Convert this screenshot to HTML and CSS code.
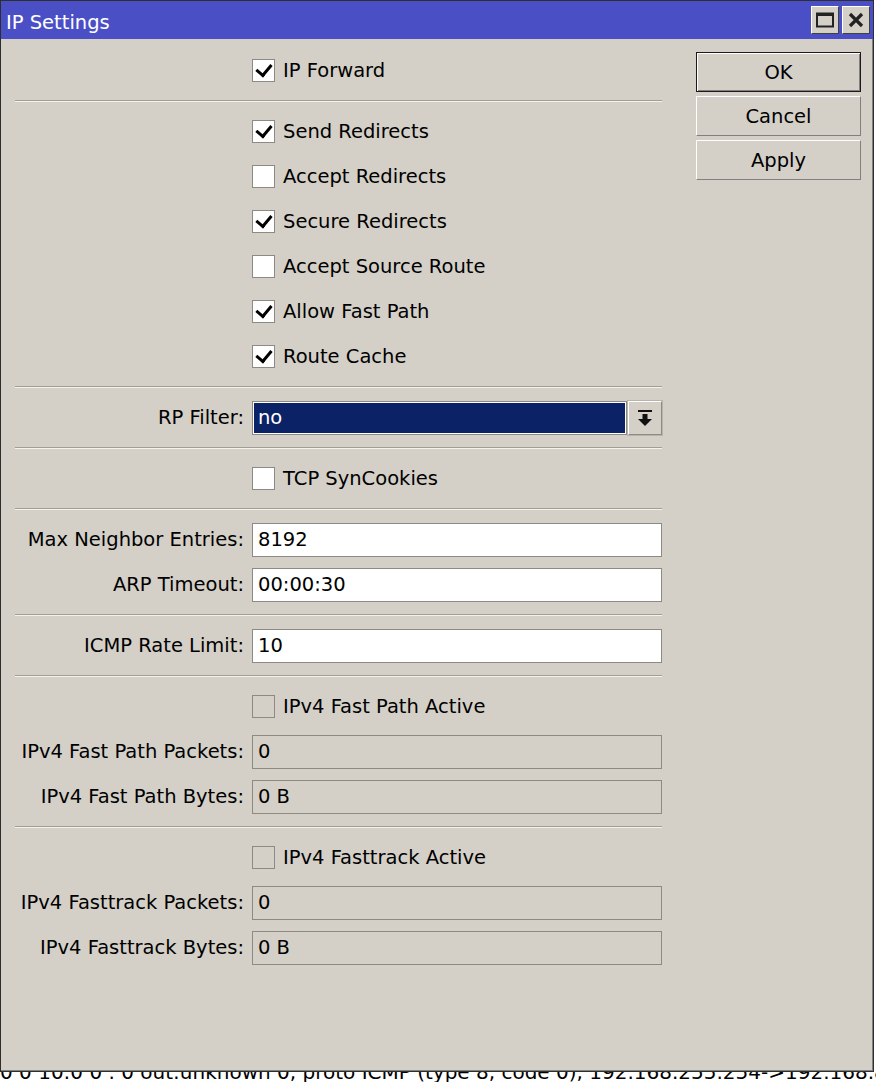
FILE: index.html
```html
<!DOCTYPE html>
<html>
    <head>
        <title>IP Settings</title>
        <link rel="stylesheet" href="styles.css">
    </head>
    <body>
        <!-- dialog window -->
        <div class="window">
            <div class="titlebar">
                <span class="title">IP Settings</span>
                <div class="tb-buttons">
                    <div class="tb-btn">
                        <svg width="18" height="16" viewBox="0 0 18 16"><rect x="1" y="1.5" width="16" height="13" fill="none" stroke="#222" stroke-width="2"/><rect x="1" y="1" width="16" height="3" fill="#222"/></svg>
                    </div>
                    <div class="tb-btn">
                        <svg width="16" height="16" viewBox="0 0 16 16"><path d="M2 2 L14 14 M14 2 L2 14" stroke="#222" stroke-width="3.2"/></svg>
                    </div>
                </div>
            </div>

            <div class="client">
                <div class="form">
                    <div class="row"><span></span><div class="check"><span class="box on"></span>IP Forward</div></div>
                    <div class="sep"></div>
                    <div class="row"><span></span><div class="check"><span class="box on"></span>Send Redirects</div></div>
                    <div class="row"><span></span><div class="check"><span class="box"></span>Accept Redirects</div></div>
                    <div class="row"><span></span><div class="check"><span class="box on"></span>Secure Redirects</div></div>
                    <div class="row"><span></span><div class="check"><span class="box"></span>Accept Source Route</div></div>
                    <div class="row"><span></span><div class="check"><span class="box on"></span>Allow Fast Path</div></div>
                    <div class="row"><span></span><div class="check"><span class="box on"></span>Route Cache</div></div>
                    <div class="sep"></div>
                    <div class="row">
                        <span class="label">RP Filter:</span>
                        <div class="combo">
                            <div class="combo-value">no</div>
                            <div class="combo-btn">
                                <svg width="16" height="18" viewBox="0 0 16 18"><rect x="1" y="1" width="14" height="2" fill="#111"/><rect x="5.5" y="5" width="5" height="5" fill="#111"/><path d="M1 10 L15 10 L8 17 Z" fill="#111"/></svg>
                            </div>
                        </div>
                    </div>
                    <div class="sep"></div>
                    <div class="row"><span></span><div class="check"><span class="box"></span>TCP SynCookies</div></div>
                    <div class="sep"></div>
                    <div class="row"><span class="label">Max Neighbor Entries:</span><div class="field">8192</div></div>
                    <div class="row"><span class="label">ARP Timeout:</span><div class="field">00:00:30</div></div>
                    <div class="sep"></div>
                    <div class="row"><span class="label">ICMP Rate Limit:</span><div class="field">10</div></div>
                    <div class="sep"></div>
                    <div class="row"><span></span><div class="check"><span class="box off"></span>IPv4 Fast Path Active</div></div>
                    <div class="row"><span class="label">IPv4 Fast Path Packets:</span><div class="field ro">0</div></div>
                    <div class="row"><span class="label">IPv4 Fast Path Bytes:</span><div class="field ro">0 B</div></div>
                    <div class="sep"></div>
                    <div class="row"><span></span><div class="check"><span class="box off"></span>IPv4 Fasttrack Active</div></div>
                    <div class="row"><span class="label">IPv4 Fasttrack Packets:</span><div class="field ro">0</div></div>
                    <div class="row"><span class="label">IPv4 Fasttrack Bytes:</span><div class="field ro">0 B</div></div>
                </div>

                <div class="actions">
                    <div class="btn default">OK</div>
                    <div class="btn">Cancel</div>
                    <div class="btn">Apply</div>
                </div>
            </div>
        </div>

        <!-- log window peeking out underneath -->
        <div class="log">
            <div class="log-line">0 0 10:0 0 . 0 out:unknown 0, proto ICMP (type 8, code 0), 192.168.255.254-&gt;192.168.88.1</div>
        </div>
    </body>
</html>
```

FILE: styles.css
```css
body {
    margin: 0px;
    background-color: #ffffff;
    font-family: "DejaVu Sans", sans-serif;
    font-size: 19.5px;
    color: #000000;
    overflow: hidden;
}
.window {
    width: 872px;
    height: 1070px;
    background-color: #d4d0c8;
    border: 1px solid #2e2e2e;
    box-shadow: inset -1px -1px 0px #808080;
}
.titlebar {
    height: 38px;
    background-color: #4b4fc6;
    display: flex;
    align-items: center;
    justify-content: space-between;
    padding-left: 5px;
    padding-right: 3px;
}
.title {
    color: white;
    font-size: 19.5px;
    padding-top: 4px;
}
.tb-buttons {
    display: flex;
    gap: 3px;
}
.tb-btn {
    width: 26px;
    height: 26px;
    background-color: #d4d0c8;
    border: 1px solid;
    border-color: #ffffff #404040 #404040 #ffffff;
    display: flex;
    align-items: center;
    justify-content: center;
}
.client {
    display: flex;
    align-items: flex-start;
}
.form {
    padding-top: 9px;
    padding-left: 14px;
    width: 647px;
}
.row {
    display: grid;
    grid-template-columns: 229px 410px;
    column-gap: 8px;
    height: 45px;
    align-items: center;
}
.label {
    text-align: right;
    white-space: nowrap;
}
.sep {
    height: 16px;
    display: flex;
    align-items: center;
}
.sep::before {
    content: "";
    width: 100%;
    border-top: 1px solid #a19e97;
    border-bottom: 1px solid #f4f2ee;
}
.check {
    display: flex;
    align-items: center;
    gap: 8px;
}
.box {
    width: 21px;
    height: 21px;
    background-color: white;
    border: 1px solid #8d8a84;
    display: flex;
    align-items: center;
    justify-content: center;
}
.box.off {
    background-color: #d4d0c8;
}
.box.on::before {
    content: "";
    width: 7px;
    height: 12px;
    border-right: 3px solid #000;
    border-bottom: 3px solid #000;
    transform: translate(0px, -2px) rotate(40deg);
}
.field {
    height: 32px;
    background-color: white;
    border: 1px solid #8d8a84;
    padding-left: 5px;
    display: flex;
    align-items: center;
}
.field.ro {
    background-color: #d4d0c8;
    border-color: #8d8a84;
}
.combo {
    display: flex;
    height: 34px;
    gap: 1px;
}
.combo-value {
    flex: 1;
    background-color: #0c2266;
    border: 1px solid #8d8a84;
    box-shadow: inset 0px 0px 0px 1px #ffffff;
    color: white;
    padding-left: 5px;
    display: flex;
    align-items: center;
}
.combo-btn {
    width: 32px;
    border: 1px solid;
    border-color: #ffffff #8d8a84 #8d8a84 #ffffff;
    outline: 1px solid #b8b4ac;
    display: flex;
    align-items: center;
    justify-content: center;
}
.actions {
    margin-left: 34px;
    margin-top: 13px;
    display: flex;
    flex-direction: column;
    gap: 4px;
}
.btn {
    width: 163px;
    height: 38px;
    border: 1px solid;
    border-color: #ffffff #808080 #808080 #ffffff;
    display: flex;
    align-items: center;
    justify-content: center;
    font-size: 19.5px;
}
.btn.default {
    border-color: #1a1a1a;
    box-shadow: inset 1px 1px 0px #ffffff, inset -1px -1px 0px #808080;
}
.log {
    height: 10px;
    overflow: hidden;
    background-color: white;
}
.log-line {
    font-size: 20px;
    line-height: 20px;
    margin-top: -10px;
    white-space: nowrap;
}
```
